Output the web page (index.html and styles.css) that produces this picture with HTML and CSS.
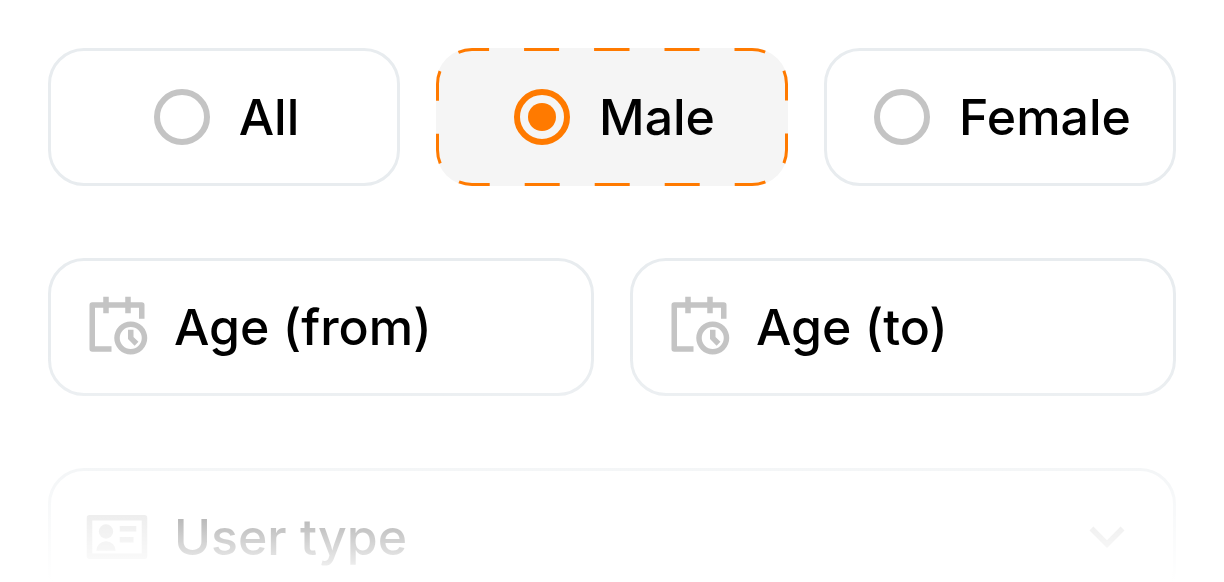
FILE: index.html
```html
<!DOCTYPE html>
<html lang="en">
<head>
	<meta charset="UTF-8">
	<meta name="viewport" content="width=device-width, initial-scale=1">
	<title>Filter</title>
	<link rel="stylesheet" href="styles.css">
</head>
<body>
	<form class="filter">
		<div class="row">
			<label class="box option">
				<input class="radio" type="radio" name="gender" value="all">
				<span>All</span>
			</label>
			<label class="box option selected">
				<svg class="dashes" viewBox="0 0 352 138" preserveAspectRatio="none" aria-hidden="true">
					<path d="M176 1.5H316A34.5 34.5 0 0 1 350.5 36V102A34.5 34.5 0 0 1 316 136.5H36A34.5 34.5 0 0 1 1.5 102V36A34.5 34.5 0 0 1 36 1.5Z"/>
				</svg>
				<input class="radio" type="radio" name="gender" value="male" checked>
				<span>Male</span>
			</label>
			<label class="box option">
				<input class="radio" type="radio" name="gender" value="female">
				<span>Female</span>
			</label>
		</div>
		<div class="row">
			<div class="box field">
				<svg class="icon" viewBox="0 0 24 24" aria-hidden="true">
					<path d="M7 1h2v2h6V1h2v2h4a1 1 0 0 1 1 1v5h-2V5h-3v2h-2V5H9v2H7V5H4v14h6v2H3a1 1 0 0 1-1-1V4a1 1 0 0 1 1-1h4z"/>
					<path fill-rule="evenodd" d="M17 10a6 6 0 1 1 0 12 6 6 0 0 1 0-12zm0 2a4 4 0 1 0 0 8 4 4 0 0 0 0-8z"/>
					<path d="M16 13h2v2.6l1.8 1.8-1.4 1.4L16 16.4z"/>
				</svg>
				<input class="control" type="text" placeholder="Age (from)" aria-label="Age (from)">
			</div>
			<div class="box field">
				<svg class="icon" viewBox="0 0 24 24" aria-hidden="true">
					<path d="M7 1h2v2h6V1h2v2h4a1 1 0 0 1 1 1v5h-2V5h-3v2h-2V5H9v2H7V5H4v14h6v2H3a1 1 0 0 1-1-1V4a1 1 0 0 1 1-1h4z"/>
					<path fill-rule="evenodd" d="M17 10a6 6 0 1 1 0 12 6 6 0 0 1 0-12zm0 2a4 4 0 1 0 0 8 4 4 0 0 0 0-8z"/>
					<path d="M16 13h2v2.6l1.8 1.8-1.4 1.4L16 16.4z"/>
				</svg>
				<input class="control" type="text" placeholder="Age (to)" aria-label="Age (to)">
			</div>
		</div>
		<div class="row">
			<div class="box field">
				<svg class="icon" viewBox="0 0 24 24" aria-hidden="true">
					<path fill-rule="evenodd" d="M2 4h20a1 1 0 0 1 1 1v14a1 1 0 0 1-1 1H2a1 1 0 0 1-1-1V5a1 1 0 0 1 1-1zm1 2v12h18V6z"/>
					<circle cx="8" cy="10" r="2.6"/>
					<path d="M4.5 17a3.5 3.5 0 0 1 7 0zM13 8h6v2h-6zM13 12h5v2h-5z"/>
				</svg>
				<select class="control" aria-label="User type">
					<option>User type</option>
				</select>
				<svg class="icon" viewBox="0 0 24 24" aria-hidden="true">
					<path d="M12 13.2l4.95-5 1.41 1.4L12 16 5.64 9.6l1.41-1.4z"/>
				</svg>
			</div>
		</div>
	</form>
	<div class="fade"></div>
</body>
</html>
```

FILE: styles.css
```css
*{
	box-sizing: border-box;
	margin: 0;
	padding: 0;
}
body{
	height: 100vh;
	overflow: hidden;
	background: #fff;
	color: #000;
	font: 500 50px/66px Inter, "Liberation Sans", sans-serif;
}
.filter{
	display: flex;
	flex-direction: column;
	gap: 72px;
	padding: 48px;
}
.row{
	display: flex;
	gap: 36px;
}
.box{
	flex: 1 1 0;
	min-width: 0;
	display: flex;
	align-items: center;
	padding: 33px;
	border: 3px solid #e8ecef;
	border-radius: 36px;
}
.option{
	position: relative;
	justify-content: center;
	gap: 24px;
	cursor: pointer;
}
.option.selected{
	border-color: transparent;
	background: #f5f5f5 border-box;
}
.dashes{
	position: absolute;
	top: -3px;
	left: -3px;
	width: calc(100% + 6px);
	height: calc(100% + 6px);
	fill: none;
	stroke: #ff7a00;
	stroke-width: 3;
	/* half of the outline, a gap over every corner */
	stroke-dasharray: 35 35 35 35 31 27 30 33 30 27 31 35 35 35;
	stroke-dashoffset: 17.5;
}
.radio{
	appearance: none;
	flex: none;
	width: 56px;
	height: 56px;
	margin: 5px;
	border: 6px solid #c4c4c4;
	border-radius: 50%;
}
.radio:checked{
	border-color: #ff7a00;
	padding: 8px;
	background: #ff7a00 content-box;
}
.field{
	gap: 24px;
}
.icon{
	flex: none;
	width: 66px;
	height: 66px;
	fill: #c4c4c4;
}
.control{
	appearance: none;
	flex: 1;
	min-width: 0;
	height: 66px;
	border: 0;
	outline: 0;
	background: none;
	color: inherit;
	font: inherit;
}
.control::placeholder{
	color: #000;
}
.fade{
	position: absolute;
	left: 0;
	right: 0;
	bottom: 0;
	height: 232px;
	background: linear-gradient(rgba(255,255,255,0), #fff);
	pointer-events: none;
}
```
